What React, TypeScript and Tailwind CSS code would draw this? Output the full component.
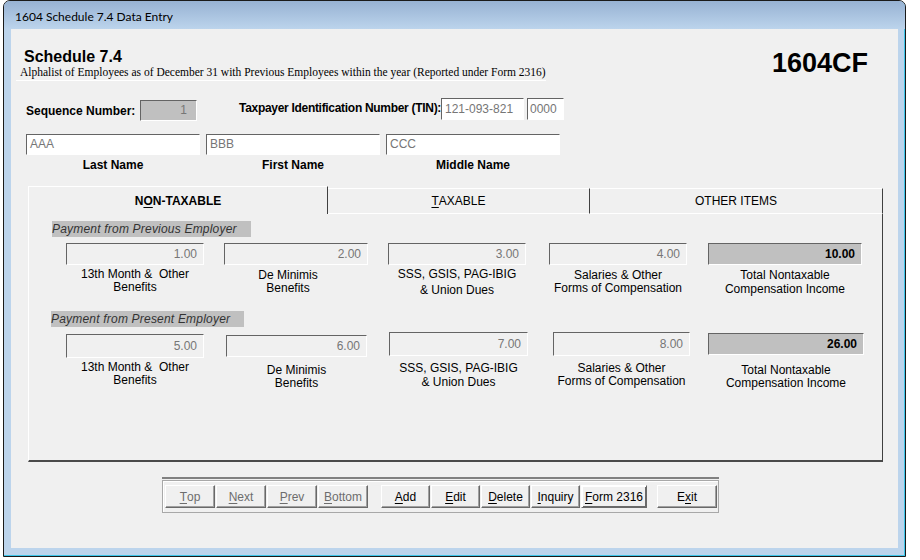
import React from "react";

const sans = "font-['Liberation_Sans',Arial,sans-serif]";
const sunken =
  "border border-t-[#646464] border-l-[#646464] border-b-white border-r-white";

type Col = {
  v: string;
  col: string;
  box: string;
  lab: string;
  lines: string[];
  total?: boolean;
};

const row1: Col[] = [
  { v: "1.00", col: "ml-[37px] w-[138px]", box: "h-[22px] leading-[20px]", lab: "mt-[3px] leading-[13px]", lines: ["13th Month &\u00a0 Other", "Benefits"] },
  { v: "2.00", col: "ml-[20px] w-[144px]", box: "h-[22px] leading-[20px]", lab: "mt-[4px] leading-[13px] mr-[16px]", lines: ["De Minimis", "Benefits"] },
  { v: "3.00", col: "ml-[20px] w-[138px]", box: "h-[22px] leading-[20px]", lab: "mt-[1px] leading-[16px]", lines: ["SSS, GSIS, PAG-IBIG", "& Union Dues"] },
  { v: "4.00", col: "ml-[23px] w-[138px]", box: "h-[22px] leading-[20px]", lab: "mt-[4px] leading-[13px]", lines: ["Salaries & Other", "Forms of Compensation"] },
  { v: "10.00", col: "ml-[21px] w-[154px]", box: "h-[22px] leading-[20px]", lab: "mt-[3px] leading-[14px]", lines: ["Total Nontaxable", "Compensation Income"], total: true },
];

const row2: Col[] = [
  { v: "5.00", col: "ml-[37px] w-[138px]", box: "mt-[2px] h-[24px] leading-[22px]", lab: "mt-[3px] leading-[13px]", lines: ["13th Month &\u00a0 Other", "Benefits"] },
  { v: "6.00", col: "ml-[22px] w-[141px]", box: "mt-[3px] h-[22px] leading-[20px]", lab: "mt-[7px] leading-[13px]", lines: ["De Minimis", "Benefits"] },
  { v: "7.00", col: "ml-[22px] w-[139px]", box: "h-[24px] leading-[22px]", lab: "mt-[5px] leading-[14px]", lines: ["SSS, GSIS, PAG-IBIG", "& Union Dues"] },
  { v: "8.00", col: "ml-[25px] w-[137px]", box: "h-[24px] leading-[22px]", lab: "mt-[6px] leading-[13px]", lines: ["Salaries & Other", "Forms of Compensation"] },
  { v: "26.00", col: "ml-[18px] w-[156px]", box: "mt-[1px] h-[22px] leading-[20px]", lab: "mt-[9px] leading-[13px]", lines: ["Total Nontaxable", "Compensation Income"], total: true },
];

function FieldCol({ c }: { c: Col }) {
  return (
    <div className={`flex flex-col items-center shrink-0 ${c.col}`}>
      <div
        className={`w-full ${c.box} ${sunken} text-right pr-[6px] text-[12px] ${
          c.total ? "bg-[#c0c0c0] font-bold text-black" : "bg-[#f0f0f0] text-[#767676]"
        }`}
      >
        {c.v}
      </div>
      <div className={`${c.lab} text-[12px] text-center whitespace-nowrap text-black`}>
        {c.lines.map((l, i) => (
          <div key={i}>{l}</div>
        ))}
      </div>
    </div>
  );
}

function U({ children }: { children: React.ReactNode }) {
  return <span className="underline underline-offset-[2px]">{children}</span>;
}

const btn =
  "h-[23px] shrink-0 flex items-center justify-center text-[12px] bg-[#f0f0f0] border border-t-white border-l-white border-b-[#696969] border-r-[#696969] shadow-[inset_-1px_-1px_0_#a0a0a0]";

export default function App() {
  return (
    <div className={`w-[920px] h-[560px] bg-white ${sans} text-black`}>
      <div className="ml-[3px] w-[903px] h-[557px] border border-[#1a1a1a] rounded-t-[7px] overflow-hidden bg-[#bcd4ec] shadow-[inset_-1px_-1px_0_#3ec6ea] flex flex-col">
        {/* title bar */}
        <div className="h-[28px] shrink-0 bg-linear-to-b from-[#97b2d3] to-[#bcd4ec] pl-[11px] pt-[8px] font-['Lato','Noto_Sans',sans-serif] text-[12px] leading-[16px] text-black">
          1604 Schedule 7.4 Data Entry
        </div>

        {/* client area */}
        <div className="mx-[7px] h-[519px] shrink-0 bg-[#f0f0f0] flex flex-col">
          {/* header */}
          <div className="flex justify-between">
            <div className="flex flex-col pl-[9px]">
              <div className="ml-[4px] mt-[19px] text-[16px] leading-[18px] font-bold">Schedule 7.4</div>
              <div className="-ml-[4px] pl-[4px] pb-[1px] border-b border-white font-['Liberation_Serif','Times_New_Roman',serif] text-[11.5px] leading-[13px] text-black whitespace-nowrap">
                Alphalist of Employees as of December 31 with Previous Employees within the year (Reported under Form 2316)
              </div>
            </div>
            <div className="mt-[19px] mr-[30px] text-[27px] leading-[30px] font-bold">1604CF</div>
          </div>

          {/* sequence / TIN */}
          <div className="flex items-start mt-[17px] pl-[15px]">
            <div className="w-[114px] shrink-0 mt-[6px] text-[12px] leading-[14px] font-bold whitespace-nowrap">
              Sequence Number:
            </div>
            <div className={`w-[57px] h-[21px] mt-[2px] shrink-0 bg-[#c0c0c0] ${sunken} text-right pr-[9px] text-[12px] leading-[19px] text-[#767676]`}>
              1
            </div>
            <div className="ml-[42px] w-[202px] shrink-0 mt-[3px] text-[12px] leading-[14px] font-bold whitespace-nowrap tracking-[-0.3px]">
              Taxpayer Identification Number (TIN):
            </div>
            <div className={`w-[83px] h-[22px] shrink-0 bg-white ${sunken} pl-[3px] text-[12px] leading-[20px] text-[#767676]`}>
              121-093-821
            </div>
            <div className={`ml-[3px] w-[37px] h-[22px] shrink-0 bg-white ${sunken} pl-[2px] text-[12px] leading-[20px] text-[#767676]`}>
              0000
            </div>
          </div>

          {/* names */}
          <div className="flex gap-[6px] mt-[13px] pl-[15px]">
            {[
              ["AAA", "Last Name"],
              ["BBB", "First Name"],
              ["CCC", "Middle Name"],
            ].map(([v, l]) => (
              <div key={l} className="flex flex-col items-center w-[174px] shrink-0">
                <div className={`w-full h-[21px] bg-white ${sunken} pl-[3px] text-[12px] leading-[19px] text-[#767676]`}>{v}</div>
                <div className="mt-[3px] text-[12px] leading-[14px] font-bold">{l}</div>
              </div>
            ))}
          </div>

          {/* tab control */}
          <div className="ml-[17px] mt-[14px] w-[855px] flex flex-col">
            <div className="flex items-end h-[28px]">
              <div className="w-[300px] h-[28px] shrink-0 border-l border-t border-r border-l-white border-t-white border-r-[#404040] flex items-center justify-center text-[12px] font-bold">
                N<U>O</U>N-TAXABLE
              </div>
              <div className="w-[262px] h-[26px] shrink-0 border-t border-r border-b border-t-white border-r-[#404040] border-b-white flex items-center justify-center text-[12px]">
                <U>T</U>AXABLE
              </div>
              <div className="w-[293px] h-[26px] shrink-0 border-t border-r border-b border-t-white border-r-[#404040] border-b-white flex items-center justify-center text-[12px]">
                OTHER ITEMS
              </div>
            </div>
            <div className="h-[248px] border-l border-r border-b-[2px] border-l-white border-r-[#404040] border-b-[#4a4a4a] flex flex-col">
              <div className="ml-[23px] mt-[7px] w-[199px] h-[16px] bg-[#c0c0c0] italic text-[12px] leading-[16px] tracking-[0.2px] text-[#333333] whitespace-nowrap">
                Payment from Previous Employer
              </div>
              <div className="mt-[6px] h-[68px] flex items-start">
                {row1.map((c, i) => (
                  <FieldCol key={i} c={c} />
                ))}
              </div>
              <div className="ml-[22px] w-[193px] h-[16px] bg-[#c0c0c0] italic text-[12px] leading-[16px] tracking-[0.2px] text-[#333333] whitespace-nowrap">
                Payment from Present Employer
              </div>
              <div className="mt-[5px] flex items-start">
                {row2.map((c, i) => (
                  <FieldCol key={i} c={c} />
                ))}
              </div>
            </div>
          </div>

          {/* buttons */}
          <div className="ml-[151px] mt-[15px] w-[557px] border-t-2 border-[#808080] pt-[1px]">
            <div className="h-[33px] border border-[#a8a8a8] shadow-[inset_1px_1px_0_white] flex items-start pt-[4px] pl-[2px]">
              <div className="flex gap-[1px]">
                <div className={`${btn} w-[50px] text-[#6d6d6d]`}><U>T</U>op</div>
                <div className={`${btn} w-[50px] text-[#6d6d6d]`}><U>N</U>ext</div>
                <div className={`${btn} w-[50px] text-[#6d6d6d]`}><U>P</U>rev</div>
                <div className={`${btn} w-[50px] text-[#6d6d6d]`}><U>B</U>ottom</div>
              </div>
              <div className="flex gap-[1px] ml-[13px]">
                <div className={`${btn} w-[49px]`}><U>A</U>dd</div>
                <div className={`${btn} w-[49px]`}><U>E</U>dit</div>
                <div className={`${btn} w-[49px]`}><U>D</U>elete</div>
                <div className={`${btn} w-[49px]`}><U>I</U>nquiry</div>
                <div className={`${btn} w-[66px] border-[#1a1a1a] border-t-[#1a1a1a] border-l-[#1a1a1a] shadow-[inset_1px_1px_0_white,inset_-1px_-1px_0_#696969]`}>
                  <U>F</U>orm 2316
                </div>
              </div>
              <div className={`${btn} w-[60px] ml-[10px]`}>E<U>x</U>it</div>
            </div>
          </div>
        </div>
      </div>
    </div>
  );
}
